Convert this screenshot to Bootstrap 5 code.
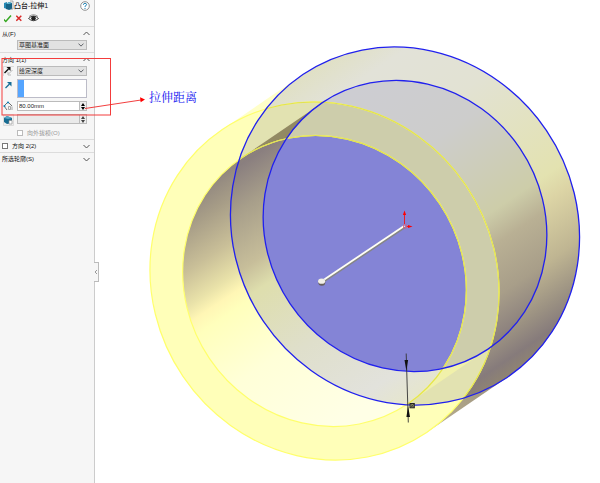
<!DOCTYPE html>
<html lang="zh-CN">
<head>
<meta charset="utf-8">
<meta name="viewport" content="width=device-width, initial-scale=1">
<title>凸台-拉伸1</title>
<link href="https://cdn.jsdelivr.net/npm/bootstrap@5.3.0/dist/css/bootstrap.min.css" rel="stylesheet">
<style>
body{font-family:"Liberation Sans","Noto Sans CJK SC",sans-serif;font-size:6px;line-height:8px;color:#111;background:#fff}
.panel{width:95px;background:#f6f6f6;border-right:1px solid #ccc}
.panel-name{font-size:7px;line-height:12px;font-weight:500;color:#222}
.panel svg,.scene svg{display:block}
.tool{padding:0;border:0;background:none;line-height:0}
.section{border-top:1px solid #dcdcdc}
.section-body{padding-bottom:2px}
.section-head{height:13px;padding:0 4px 0 2px}
.rows{display:grid;row-gap:3px}
.fold{padding:0;border:0;background:none}
.prop{display:grid;grid-template-columns:11px 70px;column-gap:3px;padding-left:3px;align-items:start}
.prop>:last-child{grid-column:2}
.panel .form-select,.panel .form-control{height:10px;min-height:0;padding:0 1px;font-size:6px;line-height:8px;border:1px solid #bbb;border-radius:0;color:#222}
.panel .form-select{background-color:#e2e2e2;background-size:6px 6px;background-position:right 2px center;padding-right:10px}
.pick{height:19px;border:1px solid #bcbcc8;background:#fff}
.pick-bar{width:6px;background:#55a5ff}
.spin{width:8px;background:#eee;border:1px solid #bbb;border-left:0}
.spin button{height:4px;padding:0;border:0;background:none;display:flex;align-items:center;justify-content:center}
.panel .form-control:disabled{background:#eaeaea}
.panel .form-check-input{width:6px;height:6px;margin:0;border-radius:0;border:1px solid #777;float:none;background-color:#fff}
.panel .form-check-input:disabled{border-color:#bbb;opacity:1}
.muted-label{color:#999}
.pull{position:absolute;left:94px;top:262px;width:5px;height:20px;padding:0;border:1px solid #bbb;border-left:0;background:#f6f6f6}
.note{position:absolute;left:0;top:56px;pointer-events:none;overflow:visible}
.note-text{font-family:"Liberation Serif","Noto Serif CJK SC","Noto Sans CJK SC",serif;font-size:12px;fill:#1414f0}
.scene{min-width:0}
</style>
<script src="https://cdn.jsdelivr.net/npm/bootstrap@5.3.0/dist/js/bootstrap.bundle.min.js"></script>
</head>
<body>
<div class="d-flex min-vh-100 overflow-hidden">
<aside class="panel position-relative flex-shrink-0 z-1">
  <header class="d-flex align-items-center justify-content-between ps-1 pe-1">
    <div class="d-flex align-items-center">
      <svg width="10" height="12" viewBox="0 0 10 12"><path d="M0 3l3-1v7l-3-1z" fill="#2589b5"/><path d="M2 4l3-2 3 1v6l-3 1-3-1z" fill="#176386"/><path d="M2 4l3-2 3 1-3 1z" fill="#62b9d5"/><path d="M6 1h3v8H7" fill="none" stroke="#888" stroke-width=".7"/></svg>
      <span class="panel-name">凸台-拉伸1</span>
    </div>
    <button class="tool" aria-label="帮助"><svg width="10" height="12" viewBox="0 0 10 12"><circle cx="5" cy="6" r="4.3" fill="#fff" stroke="#777" stroke-width=".8"/><path d="M3.4 4.8Q3.5 3.3 5 3.3T6.6 4.7Q6.5 5.5 5 6.3V7.1M5 8v1" fill="none" stroke="#2484b5" stroke-width="1"/></svg></button>
  </header>
  <div class="d-flex gap-1 px-1">
    <button class="tool" aria-label="确定"><svg width="8" height="14" viewBox="0 0 8 14"><path d="M-1 6.700L1.800 9.500 7 3.500" fill="none" stroke="#36a822" stroke-width="1.500" overflow="visible"/></svg></button>
    <button class="tool" aria-label="取消"><svg width="8" height="14" viewBox="0 0 8 14"><path d="M.3 3.700l5 5M5.300 3.700l-5 5" fill="none" stroke="#d92828" stroke-width="1.500"/></svg></button>
    <button class="tool" aria-label="预览"><svg width="11" height="14" viewBox="0 0 11 14"><path d="M.500 6.500Q5.500 1.500 10.500 6.500Q5.500 11 .500 6.500z" fill="#fff" stroke="#333" stroke-width=".9"/><circle cx="5.500" cy="6.300" r="2.300" fill="#222"/><path d="M1 4.500Q5.500 1 10 4.500" fill="none" stroke="#666" stroke-width=".7"/></svg></button>
  </div>

  <section class="section section-body">
    <div class="section-head d-flex align-items-center justify-content-between">
      <label for="from">从(F)</label>
      <button class="fold" aria-label="收起"><svg width="7" height="5" viewBox="0 0 7 5"><path d="M.5 4l3-3 3 3" fill="none" stroke="#555"/></svg></button>
    </div>
    <div class="prop"><select id="from" class="form-select"><option>草图基准面</option></select></div>
  </section>

  <section class="section section-body">
    <div class="section-head d-flex align-items-center justify-content-between">
      <span>方向 1(1)</span>
      <button class="fold" aria-label="收起"><svg width="7" height="5" viewBox="0 0 7 5"><path d="M.5 4l3-3 3 3" fill="none" stroke="#555"/></svg></button>
    </div>
    <div class="rows">
      <div class="prop">
        <button class="tool" aria-label="反向"><svg width="11" height="10" viewBox="0 0 11 10"><path d="M.5 10V.5H11" fill="none" stroke="#ccc" stroke-width=".6"/><path d="M1.500 7l4-4" stroke="#111" stroke-width="1.500"/><path d="M3.500 1h4v4z" fill="#111"/><path d="M9.500 4l-4 4M5 6v3h3" stroke="#aaa" fill="none" stroke-width=".8"/></svg></button>
        <select class="form-select" aria-label="终止条件"><option>给定深度</option></select>
      </div>
      <div class="prop">
        <svg width="11" height="12" viewBox="0 0 11 12"><path d="M2.500 9l4-4" stroke="#176d96" stroke-width="1.300"/><path d="M4 3h4.500v4.500z" fill="#176d96"/></svg>
        <div class="pick d-flex" tabindex="0" aria-label="拉伸方向"><div class="pick-bar"></div></div>
      </div>
      <div class="prop">
        <svg width="11" height="10" viewBox="0 0 11 10"><path d="M1 5l4-4 4 4M1 5l3 4" fill="none" stroke="#333" stroke-width=".7"/><circle cx="1.500" cy="5" r="1.100" fill="#1681b4"/><circle cx="5" cy="1.500" r="1.100" fill="#1681b4"/><path d="M5.500 5.500h2v3h-2zM9 5.500v3.500" fill="none" stroke="#888" stroke-width=".7"/></svg>
        <div class="d-flex"><input class="form-control flex-grow-1" value="80.00mm" aria-label="深度"><div class="spin"><button class="w-100" aria-label="增加"><svg width="4" height="3" viewBox="0 0 4 3"><path d="M0 3l2-3 2 3z"/></svg></button><button class="w-100" aria-label="减少"><svg width="4" height="3" viewBox="0 0 4 3"><path d="M0 0l2 3 2-3z"/></svg></button></div></div>
      </div>
      <div class="prop">
        <button class="tool" aria-label="拔模开/关"><svg width="11" height="12" viewBox="0 0 11 12"><path d="M.5.500h10v11H.5z" fill="#eee" stroke="#ccc" stroke-width=".6"/><path d="M1 4l3-2 5 2v5l-5 1-3-2z" fill="#176c92"/><path d="M1 4l3-2 5 2-4 1z" fill="#5aa8c8"/><path d="M6 6.500h3v3.500H6z" fill="#fff" stroke="#888" stroke-width=".6"/></svg></button>
        <div class="d-flex"><input class="form-control flex-grow-1" disabled aria-label="拔模角度"><div class="spin"><button class="w-100" aria-label="增加角度"><svg width="4" height="3" viewBox="0 0 4 3"><path d="M0 3l2-3 2 3z" fill="#444"/></svg></button><button class="w-100" aria-label="减少角度"><svg width="4" height="3" viewBox="0 0 4 3"><path d="M0 0l2 3 2-3z" fill="#444"/></svg></button></div></div>
      </div>
      <div class="prop"><div class="d-flex align-items-center gap-1"><input id="draft" class="form-check-input" type="checkbox" disabled><label class="muted-label" for="draft">向外拔模(O)</label></div></div>
    </div>
  </section>

  <section class="section section-head d-flex align-items-center justify-content-between">
    <div class="d-flex align-items-center gap-1"><input id="dir2" class="form-check-input" type="checkbox"><label for="dir2">方向 2(2)</label></div>
    <button class="fold" aria-label="展开"><svg width="7" height="5" viewBox="0 0 7 5"><path d="M.5 1l3 3 3-3" fill="none" stroke="#555"/></svg></button>
  </section>
  <section class="section section-head d-flex align-items-center justify-content-between">
    <span>所选轮廓(S)</span>
    <button class="fold" aria-label="展开"><svg width="7" height="5" viewBox="0 0 7 5"><path d="M.5 1l3 3 3-3" fill="none" stroke="#555"/></svg></button>
  </section>

  <button class="pull" aria-label="折叠面板"><svg width="4" height="6" viewBox="0 0 4 6"><path d="M3 1L1 3l2 2" fill="none" stroke="#999"/></svg></button>

  <svg class="note" width="200" height="62" viewBox="0 0 200 62">
    <rect x="2" y="2.500" width="108.500" height="56.500" fill="none" stroke="#f33c3c"/>
    <path d="M85 52.500L141 44" stroke="#f02828" stroke-width=".9"/>
    <path d="M145 43.500l-5-2.300.700 5z" fill="#f00"/>
    <text class="note-text" x="149" y="46">拉伸距离</text>
  </svg>
</aside>

<main class="scene flex-grow-1">
<svg class="w-100" viewBox="95 0 505 483" role="img" aria-label="圆筒拉伸预览">
  <defs>
    <ellipse id="bo" rx="182.700" ry="170.700" transform="translate(405 226) rotate(56)"/>
    <ellipse id="bi" rx="148.500" ry="138.700" transform="translate(405 226) rotate(56)"/>
    <ellipse id="yo" rx="182.700" ry="170.700" transform="translate(324.500 281) rotate(56)"/>
    <ellipse id="yi" rx="148.500" ry="138.700" transform="translate(324.500 281) rotate(56)"/>
    <clipPath id="cbo"><use href="#bo"/></clipPath>
    <clipPath id="cbi"><use href="#bi"/></clipPath>
    <clipPath id="cyo"><use href="#yo"/></clipPath>
    <clipPath id="cyi"><use href="#yi"/></clipPath>
    <!-- shading runs across the extrusion axis -->
    <linearGradient id="g1" gradientUnits="userSpaceOnUse" x1="303" y1="74.500" x2="507" y2="377.500"><stop offset="0" stop-color="#e0e0c4"/><stop offset=".1" stop-color="#e2e2d8"/><stop offset=".28" stop-color="#e2e2d3"/><stop offset=".6" stop-color="#e3e2b0"/><stop offset=".66" stop-color="#dcd4a5"/><stop offset=".8" stop-color="#bfb592"/><stop offset=".9" stop-color="#9b9182"/><stop offset=".96" stop-color="#867b7b"/><stop offset="1" stop-color="#8f8472"/></linearGradient>
    <linearGradient id="g2" gradientUnits="userSpaceOnUse" x1="303" y1="74.500" x2="507" y2="377.500"><stop offset=".12" stop-color="#cdcdd2"/><stop offset=".35" stop-color="#cdcdcc"/><stop offset=".6" stop-color="#cdcda9"/><stop offset=".68" stop-color="#b9b094"/><stop offset=".8" stop-color="#a89e89"/><stop offset=".92" stop-color="#857a7b"/></linearGradient>
    <linearGradient id="g3" gradientUnits="userSpaceOnUse" x1="303" y1="74.500" x2="507" y2="377.500"><stop offset=".1" stop-color="#91877f"/><stop offset=".17" stop-color="#a79d87"/><stop offset=".27" stop-color="#c9bf98"/><stop offset=".35" stop-color="#e9e2a9"/><stop offset=".39" stop-color="#fff6b5"/><stop offset=".43" stop-color="#ffffbc"/><stop offset=".6" stop-color="#ffffd8"/><stop offset=".85" stop-color="#ffffe6"/></linearGradient>
    <linearGradient id="g4" gradientUnits="userSpaceOnUse" x1="303" y1="74.500" x2="507" y2="377.500"><stop offset=".06" stop-color="#8f8570"/><stop offset=".11" stop-color="#8a7f7f"/><stop offset=".21" stop-color="#a79e8a"/><stop offset=".35" stop-color="#c7be9a"/><stop offset=".42" stop-color="#dedead"/><stop offset=".62" stop-color="#dfdfcb"/><stop offset=".82" stop-color="#e2e2dc"/><stop offset=".95" stop-color="#e8e8c5"/></linearGradient>
    <linearGradient id="g5" gradientUnits="userSpaceOnUse" x1="427" y1="432" x2="507" y2="377"><stop offset="0" stop-color="#bdb38d"/><stop offset="1" stop-color="#978d80"/></linearGradient>
  </defs>
  <path d="M222.300 129.500L302.800 74.500 405 226 324.500 281z" fill="#ffffc9"/>
  <path d="M426.700 432.500L507.200 377.500 405 226 324.500 281z" fill="url(#g5)"/>
  <rect x="200" y="40" width="400" height="400" fill="url(#g1)" clip-path="url(#cbo)"/>
  <rect x="200" y="40" width="400" height="400" fill="url(#g2)" clip-path="url(#cbi)"/>
  <use href="#yo" fill="#ffffb9"/>
  <g clip-path="url(#cyo)">
    <use href="#bo" fill="#e2e2b1"/>
    <g clip-path="url(#cbo)">
      <path d="M241.500 157.900L322 102.900 405 226 324.500 281z" fill="#928963"/>
      <path d="M407.500 404.100L488 349.100 405 226 324.500 281z" fill="#f1f1aa"/>
    </g>
    <use href="#bi" fill="#cdcdab"/>
  </g>
  <rect x="140" y="90" width="400" height="380" fill="url(#g3)" clip-path="url(#cyi)"/>
  <g clip-path="url(#cyi)"><rect x="200" y="40" width="400" height="400" fill="url(#g4)" clip-path="url(#cbo)"/><use href="#bi" fill="#8484d6"/></g>
  <g fill="none" stroke="#ffff6c" stroke-width="1.200"><use href="#yo"/><use href="#yi"/></g>
  <g clip-path="url(#cbo)" fill="none" stroke="#e2e252" stroke-width="1.100"><use href="#yo"/><use href="#yi"/></g>
  <g fill="none" stroke="#2020ee" stroke-width="1.300"><use href="#bo"/><use href="#bi"/></g>
  <path d="M322 282.500L405 227" stroke="#858585" stroke-width="2.200"/>
  <path d="M322 281L404.500 225.700" stroke="#fffff5" stroke-width="1.800"/>
  <circle cx="321.800" cy="282.200" r="3.500" fill="#665f5c"/><ellipse cx="321.600" cy="281.200" rx="3.500" ry="2.600" fill="#f1efe8"/>
  <g stroke="#f00" stroke-width=".8" fill="none"><path d="M404.500 224v-10M406 226.500h4"/><rect x="403.500" y="225" width="3" height="3" stroke="#d86080"/></g>
  <path d="M404.500 210.500l-1.600 4.500h3.200zM412.500 226.500l-4.500-1.500v3z" fill="#f00"/>
  <path d="M406.200 353.500L408.300 422.500" stroke="#333" stroke-width=".9"/>
  <path d="M406.400 371l-1.900-11h3.600zM408.100 406l-1.700 11h3.600z" fill="#111"/>
  <rect x="410" y="403.500" width="4.300" height="4.300" fill="#8b8b62" stroke="#222"/><path d="M410.500 404l3.500 3.500M414 404l-3.500 3.500" stroke="#333" stroke-width=".7"/>
</svg>
</main>
</div>
</body>
</html>
